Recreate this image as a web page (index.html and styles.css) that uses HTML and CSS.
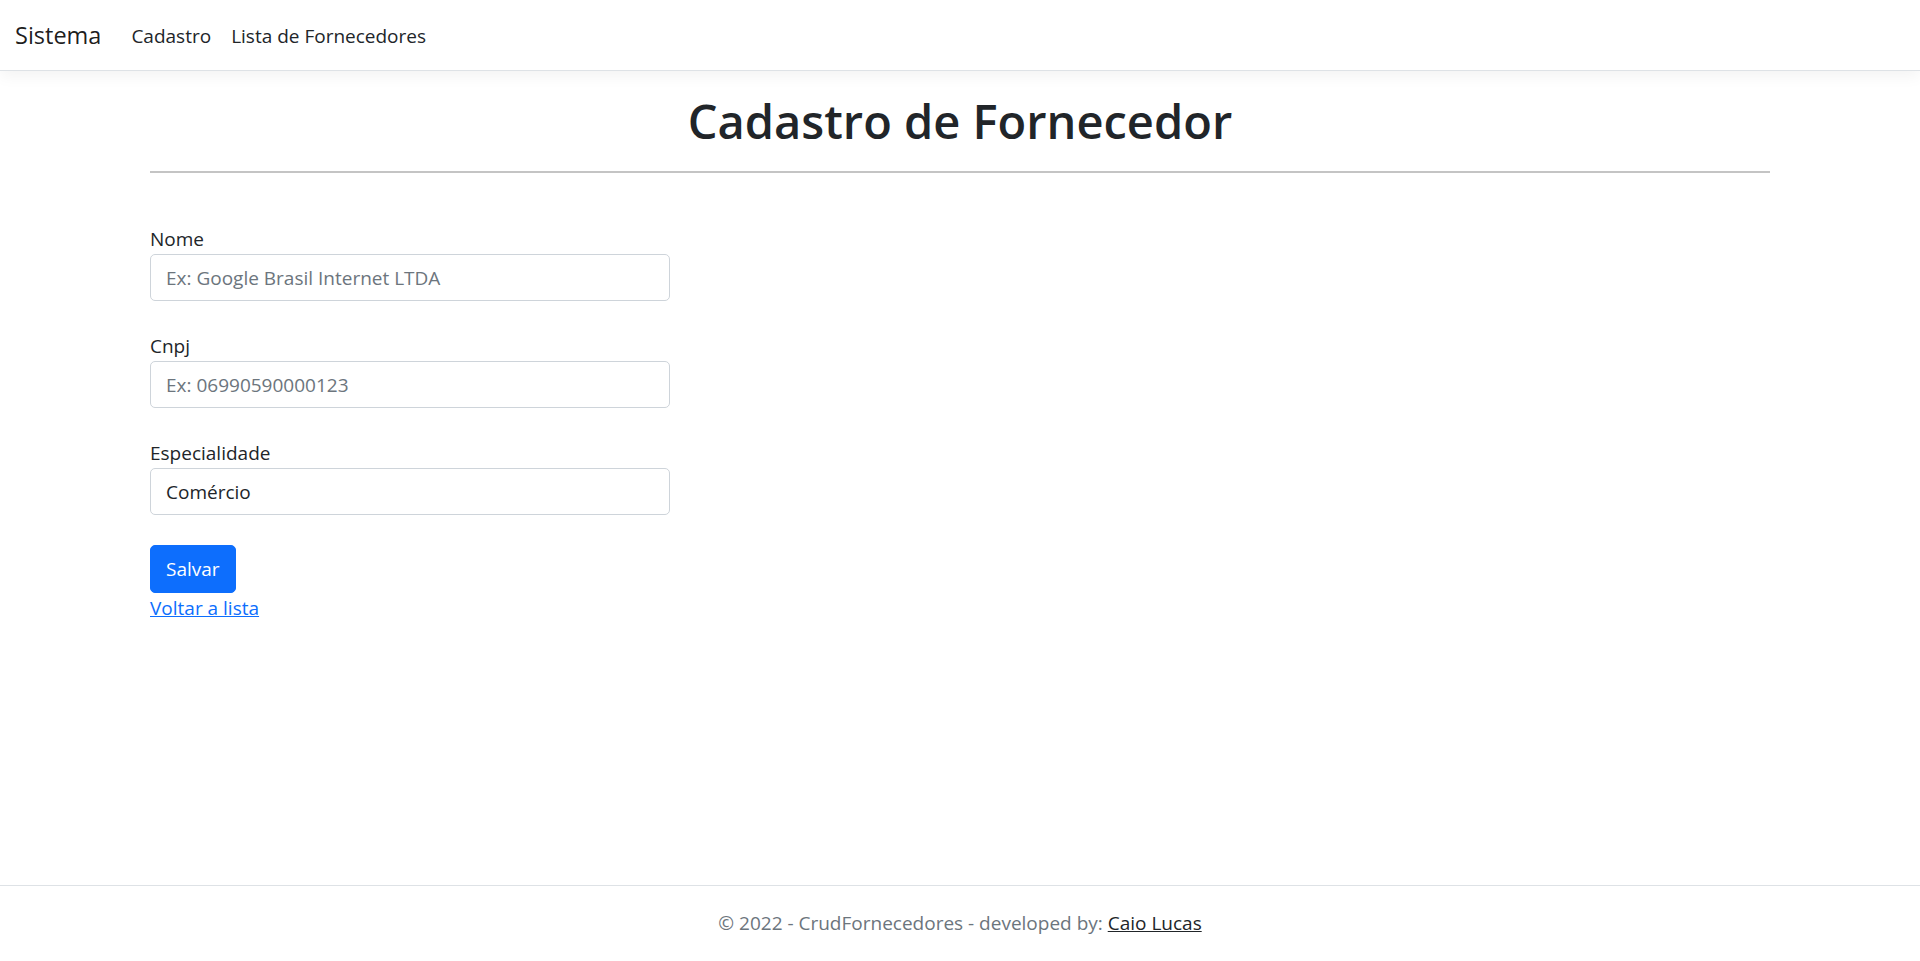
FILE: index.html
```html
<!DOCTYPE html>
<html lang="pt-br">
<head>
<meta charset="utf-8">
<title>Cadastro - CrudFornecedores</title>
<link rel="stylesheet" href="styles.css">
</head>
<body>
<header class="navbar">
  <a class="brand" href="#">Sistema</a>
  <nav class="nav">
    <a class="nav-link" href="#">Cadastro</a>
    <a class="nav-link" href="#">Lista de Fornecedores</a>
  </nav>
</header>
<main class="container">
  <h1 class="title">Cadastro de Fornecedor</h1>
  <hr class="divider">
  <form class="form">
    <div class="form-group">
      <label class="label" for="nome">Nome</label>
      <input class="control" id="nome" type="text" placeholder="Ex: Google Brasil Internet LTDA">
    </div>
    <div class="form-group">
      <label class="label" for="cnpj">Cnpj</label>
      <input class="control" id="cnpj" type="text" placeholder="Ex: 06990590000123">
    </div>
    <div class="form-group">
      <label class="label" for="esp">Especialidade</label>
      <select class="control" id="esp">
        <option>Comércio</option>
        <option>Serviço</option>
        <option>Indústria</option>
      </select>
    </div>
    <button class="btn" type="button">Salvar</button>
  </form>
  <a class="back-link" href="#">Voltar a lista</a>
</main>
<footer class="footer">
  <div class="footer-inner">&copy; 2022 - CrudFornecedores - developed by: <a class="footer-link" href="#">Caio Lucas</a></div>
</footer>
</body>
</html>
```
FILE: styles.css
```css
* { box-sizing: border-box; }
html, body { margin: 0; padding: 0; }
body {
  font-family: "Open Sans", "Noto Sans", "Liberation Sans", sans-serif;
  font-size: 19px;
  line-height: 30px;
  color: #212529;
  background: #fff;
  min-height: 100vh;
  display: flex;
  flex-direction: column;
}
.navbar {
  display: flex;
  align-items: center;
  height: 71px;
  padding: 1px 15px 0;
  background: #fff;
  border-bottom: 1px solid #dee2e6;
  box-shadow: 0 5px 15px rgba(0,0,0,.05);
}
.brand {
  font-size: 23.5px;
  color: rgba(0,0,0,.9);
  text-decoration: none;
  margin-right: 20px;
  line-height: 37.5px;
}
.nav { display: flex; }
.nav-link {
  color: #212529;
  text-decoration: none;
  padding: 0 10px;
}
.container {
  width: 1620px;
  margin: 20px auto 0;
  flex: 1;
}
.title {
  margin: 0;
  text-align: center;
  font-size: 47px;
  font-weight: 600;
  line-height: 60px;
}
.divider {
  border: 0;
  border-top: 2px solid #c4c4c4;
  margin: 20px 0 51px;
}
.form { width: 520px; display: flex; flex-direction: column; align-items: flex-start; }
.form-group { width: 100%; display: flex; flex-direction: column; margin-bottom: 30px; }
.label { line-height: 30px; }
.control {
  width: 100%;
  height: 47px;
  padding: 0 15px;
  font: inherit;
  color: #212529;
  background: #fff;
  border: 1px solid #ced4da;
  border-radius: 5px;
  appearance: none;
  -webkit-appearance: none;
  outline: none;
}
.control::placeholder { color: #6c757d; }
.btn {
  font: inherit;
  color: #fff;
  background: #0d6efd;
  border: 1px solid #0d6efd;
  border-radius: 5px;
  padding: 8px 15px;
  line-height: 30px;
}
.back-link {
  color: #0d6efd;
  text-decoration: underline;
  line-height: 30px;
}
.footer {
  border-top: 1px solid #dee2e6;
  color: #6c757d;
  line-height: 75px;
  text-align: center;
  white-space: nowrap;
}
.footer-link { color: #212529; text-decoration: underline; }
```
